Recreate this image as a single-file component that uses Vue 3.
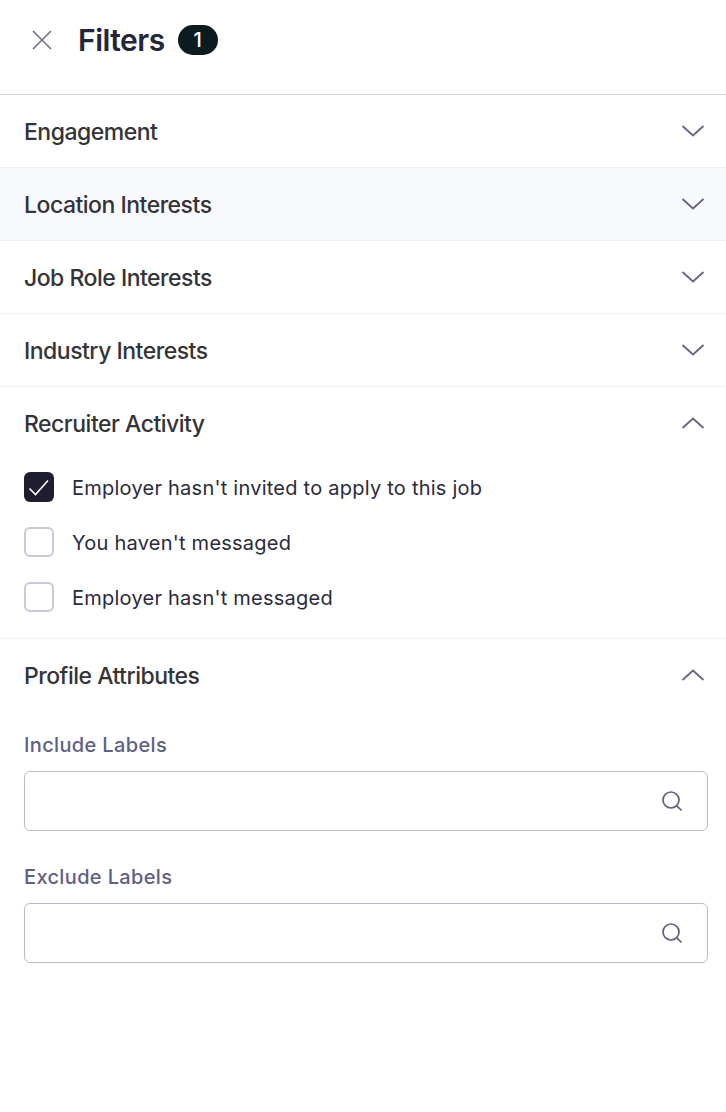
<template>
  <div class="filters">
    <header class="filters-header">
      <button class="close-btn" aria-label="Close">
        <svg width="24" height="24" viewBox="0 0 24 24" fill="none">
          <path d="M3 3L21 21M21 3L3 21" stroke="#6f6f91" stroke-width="1.6" />
        </svg>
      </button>
      <h1 class="filters-title">Filters</h1>
      <span class="count-badge">1</span>
    </header>

    <section
      v-for="section in sections"
      :key="section.title"
      class="section"
      :class="{ hovered: section.hovered, open: section.open }"
    >
      <div class="section-head">
        <span class="section-title">{{ section.title }}</span>
        <svg class="chevron" width="24" height="12" viewBox="0 0 24 12" fill="none">
          <path v-if="section.open" d="M1.5 11L12 1.5L22.5 11" stroke="#646486" stroke-width="1.8" />
          <path v-else d="M1.5 1L12 10.5L22.5 1" stroke="#646486" stroke-width="1.8" />
        </svg>
      </div>

      <div v-if="section.checks" class="check-list">
        <label v-for="check in section.checks" :key="check.label" class="check-row">
          <span class="checkbox" :class="{ checked: check.checked }">
            <svg v-if="check.checked" width="22" height="18" viewBox="0 0 22 18" fill="none">
              <path d="M1.5 10.5L7.5 16.5L20 2.5" stroke="#fff" stroke-width="1.6" />
            </svg>
          </span>
          <span class="check-label">{{ check.label }}</span>
        </label>
      </div>

      <div v-if="section.fields" class="field-list">
        <div v-for="field in section.fields" :key="field" class="field">
          <div class="field-label">{{ field }}</div>
          <div class="field-input">
            <svg width="22" height="22" viewBox="0 0 22 22" fill="none">
              <circle cx="10" cy="10" r="8" stroke="#5f5f7f" stroke-width="1.7" />
              <path d="M15.8 15.8L20.5 20.5" stroke="#5f5f7f" stroke-width="1.7" />
            </svg>
          </div>
        </div>
      </div>
    </section>
  </div>
</template>

<script setup>
const sections = [
  { title: 'Engagement' },
  { title: 'Location Interests', hovered: true },
  { title: 'Job Role Interests' },
  { title: 'Industry Interests' },
  {
    title: 'Recruiter Activity',
    open: true,
    checks: [
      { label: "Employer hasn't invited to apply to this job", checked: true },
      { label: "You haven't messaged" },
      { label: "Employer hasn't messaged" }
    ]
  },
  {
    title: 'Profile Attributes',
    open: true,
    fields: ['Include Labels', 'Exclude Labels']
  }
]
</script>

<style scoped>
.filters {
  width: 726px;
  min-height: 1112px;
  background: #ffffff;
  font-family: Inter, "Liberation Sans", sans-serif;
  color: #2e2e38;
}

.filters-header {
  display: flex;
  align-items: center;
  height: 95px;
  padding: 0 0 15px 30px;
  box-sizing: border-box;
  border-bottom: 1px solid #d3d3e8;
}

.close-btn {
  display: flex;
  width: 24px;
  height: 24px;
  padding: 0;
  border: 0;
  background: none;
}

.filters-title {
  margin: 0 0 0 24px;
  font-size: 30px;
  line-height: 36px;
  font-weight: 580;
  letter-spacing: -0.5px;
  color: #25253a;
}

.count-badge {
  display: flex;
  align-items: center;
  justify-content: center;
  width: 40px;
  height: 30px;
  margin-left: 13px;
  border-radius: 15px;
  background: #0b1c20;
  color: #ffffff;
  font-size: 20px;
  font-weight: 500;
}

.section {
  border-bottom: 1px solid #f0f0f6;
}

.section:last-child {
  border-bottom: 0;
}

.section.hovered {
  background: #f8f9fd;
}

.section-head {
  display: flex;
  align-items: center;
  justify-content: space-between;
  height: 72px;
  padding: 0 21px 0 24px;
}

.section-title {
  padding-top: 2px;
  font-size: 23px;
  font-weight: 450;
  letter-spacing: -0.5px;
  color: #333338;
}

.check-list {
  display: flex;
  flex-direction: column;
  gap: 25px;
  padding: 13px 24px 26px;
}

.check-row {
  display: flex;
  align-items: center;
  gap: 18px;
  height: 30px;
}

.checkbox {
  display: flex;
  align-items: center;
  justify-content: center;
  width: 30px;
  height: 30px;
  box-sizing: border-box;
  border: 2px solid #c8c8de;
  border-radius: 6px;
  background: #ffffff;
}

.checkbox.checked {
  border: 0;
  background: #1e1e30;
}

.check-label {
  padding-top: 1px;
  font-size: 20px;
  letter-spacing: 0.24px;
  color: #2a2a3c;
}

.field-list {
  display: flex;
  flex-direction: column;
  gap: 33px;
  padding: 21px 18px 0 24px;
}

.field-label {
  margin-bottom: 13px;
  font-size: 20px;
  line-height: 26px;
  font-weight: 450;
  letter-spacing: 0.35px;
  color: #5f5f85;
}

.field-input {
  display: flex;
  align-items: center;
  justify-content: flex-end;
  height: 60px;
  padding-right: 24px;
  box-sizing: border-box;
  border: 1px solid #b8b8d0;
  border-radius: 6px;
}
</style>

<style>
html,
body {
  margin: 0;
  background: #ffffff;
}
</style>
